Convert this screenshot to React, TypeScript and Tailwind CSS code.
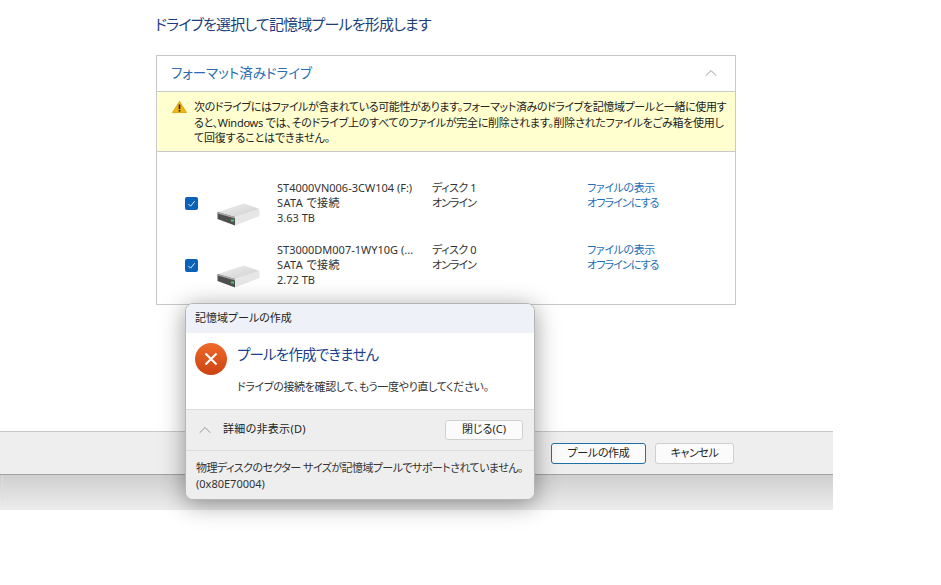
import { ChevronUp } from "lucide-react";

const drives = [
  { name: "ST4000VN006-3CW104 (F:)", size: "3.63 TB", disk: "ディスク 1" },
  { name: "ST3000DM007-1WY10G (...", size: "2.72 TB", disk: "ディスク 0" },
];

function DriveIcon() {
  return (
    <svg width="43" height="23" viewBox="0 0 43 23">
      <defs>
        <linearGradient id="driveTop" x1="0" y1="0" x2="1" y2="1">
          <stop offset="0" stopColor="#f2f2f2" />
          <stop offset="1" stopColor="#cccccc" />
        </linearGradient>
      </defs>
      <path d="M0.5 9 L27 0.5 L42.5 6 L18 14 Z" fill="url(#driveTop)" />
      <path d="M18 14 L42.5 6 L42.5 13 L18 22.5 Z" fill="#e6e6e6" />
      <path d="M0.5 9 L18 14 L18 22.5 L0.5 16 Z" fill="#4f4f4f" />
      <path d="M0.5 9 L18 14 L18 15.5 L0.5 10.5 Z" fill="#a8a8a8" />
      <rect x="14" y="16.5" width="3" height="2" fill="#3fd070" />
    </svg>
  );
}

function DriveRow({ name, size, disk }: { name: string; size: string; disk: string }) {
  return (
    <div className="flex h-[62px]">
      <div className="w-[29px] pt-[17px]">
        <div className="flex h-[13px] w-[13px] items-center justify-center rounded-[2px] bg-[#0a62b8]">
          <svg width="9" height="9" viewBox="0 0 10 10" fill="none" stroke="#fff" strokeWidth="1">
            <path d="M1.5 5.5 L4 8 L8.5 2.5" />
          </svg>
        </div>
      </div>
      <div className="w-[63px] pt-[23px] pl-[3px]">
        <DriveIcon />
      </div>
      <div className="w-[155px] text-[#333] leading-[15px]">
        <div className="whitespace-nowrap">{name}</div>
        <div className="tracking-[0.4px]">SATA で接続</div>
        <div>{size}</div>
      </div>
      <div className="w-[155px] text-[#333] leading-[15px]">
        <div className="tracking-[-0.5px]">{disk}</div>
        <div className="tracking-[-1px]">オンライン</div>
      </div>
      <div className="text-[#1f6fb5] leading-[15px]">
        <div className="tracking-[-0.4px]">ファイルの表示</div>
        <div className="tracking-[-0.9px]">オフラインにする</div>
      </div>
    </div>
  );
}

export default function App() {
  return (
    <div className="relative h-[585px] w-[941px] overflow-hidden bg-white font-['Noto_Sans','Noto_Sans_CJK_JP',sans-serif] text-[11px] [font-feature-settings:'palt']">
      <div className="flex h-[510px] w-[833px] flex-col">
        {/* content */}
        <div className="h-[431px] pl-[156px]">
          <h1 className="ml-[-1px] h-[55px] pt-[13px] text-[15px] leading-[22px] tracking-[-0.8px] text-[#1b3f7a]">
            ドライブを選択して記憶域プールを形成します
          </h1>
          <div className="w-[580px] border border-[#c9c9c9]">
            <div className="flex h-[35px] items-center justify-between pr-[14px] pb-[1px] pl-[14px] text-[13.5px] text-[#2a6db0]">
              <span>フォーマット済みドライブ</span>
              <ChevronUp size={20} strokeWidth={0.9} className="text-[#777]" />
            </div>
            <div className="flex h-[61px] border-y border-[#c9c9c9] bg-[#ffffcf] pt-[7px] pl-[15px] text-[#222] leading-[15.5px]">
              <svg width="15" height="14" viewBox="0 0 18 15" className="mt-[1px] shrink-0">
                <path d="M9 .8 L17.4 14.2 L.6 14.2 Z" fill="#f2b70f" stroke="#d69a08" strokeWidth="1" strokeLinejoin="round" />
                <rect x="8" y="4.5" width="2" height="5.5" fill="#222" />
                <rect x="8" y="11" width="2" height="2" fill="#222" />
              </svg>
              <div className="ml-[7px] w-[540px] whitespace-nowrap">
                <p className="tracking-[-0.4px]">次のドライブにはファイルが含まれている可能性があります。フォーマット済みのドライブを記憶域プールと一緒に使用す</p>
                <p className="tracking-[-0.26px]">ると、Windows では、そのドライブ上のすべてのファイルが完全に削除されます。削除されたファイルをごみ箱を使用し</p>
                <p className="tracking-[-0.15px]">て回復することはできません。</p>
              </div>
            </div>
            <div className="h-[152px] pt-[28px] pl-[28px]">
              {drives.map((d) => (
                <DriveRow key={d.name} {...d} />
              ))}
            </div>
          </div>
        </div>
        {/* footer */}
        <div className="flex h-[44px] items-center justify-end gap-[9px] border-y border-t-[#c8c8c8] border-b-[#a3a3a3] bg-[#eeeeee] pr-[99px]">
          <button className="h-[21px] w-[95px] rounded-[3px] border border-[#1f6fa8] bg-[#fbfbfb] tracking-[-0.3px] text-[#222]">
            プールの作成
          </button>
          <button className="h-[21px] w-[79px] rounded-[3px] border border-[#d0d0d0] bg-[#fbfbfb] tracking-[-0.4px] text-[#222]">
            キャンセル
          </button>
        </div>
        <div className="flex-1 bg-gradient-to-b from-[#cfcfcf] to-[#ededed]">
          <div className="h-[25px] w-[3px] border-r border-[#dddddd]" />
        </div>
      </div>

      {/* error dialog */}
      <div className="absolute top-[303px] left-[185px] flex h-[197px] w-[350px] flex-col overflow-hidden rounded-[8px] border border-[#b5b5b5] bg-white shadow-[0_4px_24px_rgba(0,0,0,0.4)]">
        <div className="flex h-[29px] shrink-0 items-center bg-[#eef2f8] pl-[9px] text-[#222]">記憶域プールの作成</div>
        <div className="h-[76px] shrink-0 pt-[10px] pl-[9px]">
          <div className="flex items-start">
            <div className="flex h-[32px] w-[32px] items-center justify-center rounded-full bg-gradient-to-b from-[#ef6a2a] to-[#cc4210]">
              <svg width="14" height="14" viewBox="0 0 14 14" stroke="#fff" strokeWidth="2">
                <path d="M1.5 1.5 L12.5 12.5 M12.5 1.5 L1.5 12.5" />
              </svg>
            </div>
            <span className="ml-[10px] text-[14.5px] leading-[22px] tracking-[-0.8px] text-[#1b3f8a]">プールを作成できません</span>
          </div>
          <p className="mt-[4px] ml-[42px] tracking-[-0.35px] text-[#333]">ドライブの接続を確認して、もう一度やり直してください。</p>
        </div>
        <div className="flex h-[41px] shrink-0 items-center justify-between border-t border-[#dcdcdc] bg-[#eeeeee] pr-[11px] pb-[1px] pl-[9px] text-[#222]">
          <div className="flex items-center gap-[8px]">
            <ChevronUp size={20} strokeWidth={0.8} className="text-[#666]" />
            <span className="tracking-[0.3px]">詳細の非表示(D)</span>
          </div>
          <button className="h-[20px] w-[78px] rounded-[3px] border border-[#d0d0d0] bg-[#fbfbfb]">閉じる(C)</button>
        </div>
        <div className="flex-1 border-t border-[#dcdcdc] bg-[#eeeeee] pt-[9px] pl-[10px] text-[#333] leading-[16px]">
          <p className="tracking-[-0.55px] whitespace-nowrap">物理ディスクのセクター サイズが記憶域プールでサポートされていません。</p>
          <p>(0x80E70004)</p>
        </div>
      </div>
    </div>
  );
}
